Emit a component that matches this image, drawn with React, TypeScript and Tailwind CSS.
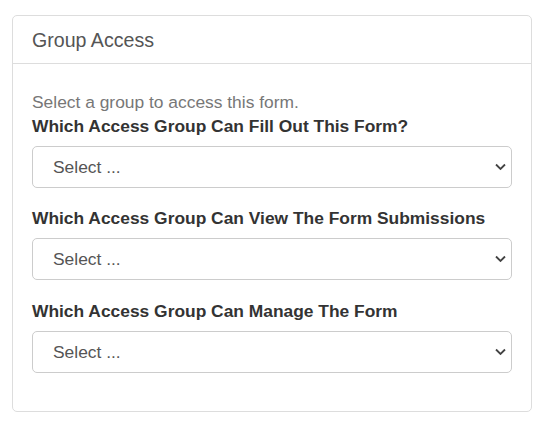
const groups = [
  { label: 'Which Access Group Can Fill Out This Form?', mt: 'mt-0' },
  { label: 'Which Access Group Can View The Form Submissions', mt: 'mt-[18px]' },
  { label: 'Which Access Group Can Manage The Form', mt: 'mt-[19px]' },
]

function Chevron() {
  return (
    <svg width="11" height="7" viewBox="0 0 11 7" className="pointer-events-none absolute right-[6px] top-1/2 -translate-y-1/2">
      <path d="M1 1 L5.5 5.5 L10 1" fill="none" stroke="#444" strokeWidth="1.8" />
    </svg>
  )
}

export default function App() {
  return (
    <div className="min-h-screen bg-white pt-[15px] px-[12px] font-['Liberation_Sans',Arial,sans-serif]">
      <div className="w-[520px] rounded-[5px] border border-[#dddddd] bg-white">
        {/* Header */}
        <div className="h-[48px] flex items-center px-[19px] pt-[2px] border-b border-[#dddddd]">
          <h3 className="text-[19.6px] leading-none text-[#555555]">Group Access</h3>
        </div>

        {/* Body */}
        <div className="px-[19px] pt-[26px] pb-[38px]">
          <p className="text-[17.4px] leading-[24px] text-[#777777]">Select a group to access this form.</p>
          {groups.map((g) => (
            <div key={g.label} className={g.mt}>
              <label className="block text-[17.4px] leading-[24px] font-bold text-[#333333]">{g.label}</label>
              <div className="relative mt-[8px]">
                <select className="w-full h-[42px] appearance-none rounded-[5px] border border-[#cccccc] bg-white pl-[20px] text-[17.4px] text-[#555555] outline-none">
                  <option>Select ...</option>
                </select>
                <Chevron />
              </div>
            </div>
          ))}
        </div>
      </div>
    </div>
  )
}
